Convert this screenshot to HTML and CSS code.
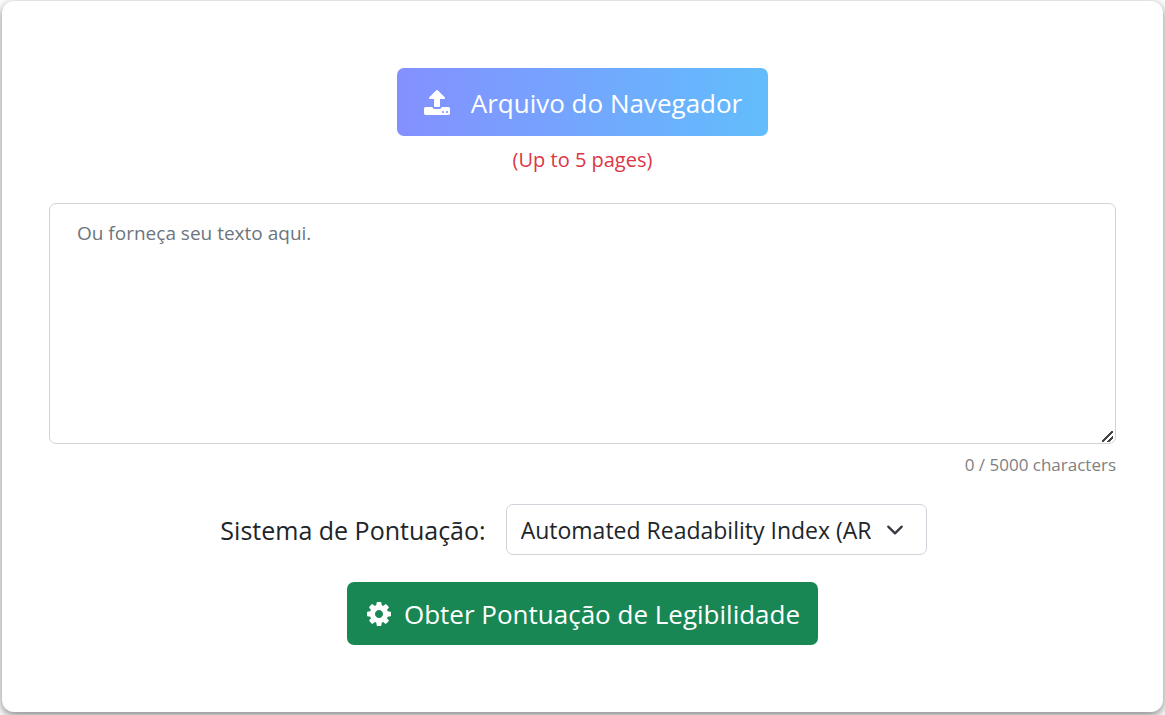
FILE: index.html
```html
<!DOCTYPE html>
<html lang="pt">
<head>
  <meta charset="UTF-8" />
  <meta name="viewport" content="width=device-width, initial-scale=1.0"/>
  <title>Pontuação de Legibilidade</title>
  <link rel="stylesheet" href="styles.css">
</head>
<body>
  <form class="card" id="scoreForm">
    <button type="button" class="btn btn-upload">
      <svg class="icon" viewBox="0 0 1792 1792" aria-hidden="true"><path d="M1344 1472q0-26-19-45t-45-19-45 19-19 45 19 45 45 19 45-19 19-45zm256 0q0-26-19-45t-45-19-45 19-19 45 19 45 45 19 45-19 19-45zm128-224v320q0 40-28 68t-68 28h-1472q-40 0-68-28t-28-68v-320q0-40 28-68t68-28h427q21 56 70.5 92t110.5 36h256q61 0 110.5-36t70.5-92h427q40 0 68 28t28 68zm-325-648q-17 40-59 40h-256v448q0 26-19 45t-45 19h-256q-26 0-45-19t-19-45v-448h-256q-42 0-59-40-17-39 14-69l448-448q18-19 45-19t45 19l448 448q31 30 14 69z"/></svg>
      <span>Arquivo do Navegador</span>
    </button>
    <p class="limit">(Up to 5 pages)</p>

    <textarea class="text-box" id="userText" aria-label="Texto" maxlength="5000" placeholder="Ou forneça seu texto aqui."></textarea>
    <p class="counter"><span id="charCount">0</span> / 5000 characters</p>

    <div class="score-row">
      <label for="scoreSystem">Sistema de Pontuação:</label>
      <div class="select-wrap">
        <select id="scoreSystem">
          <option>Automated Readability Index (ARI)</option>
          <option>Flesch Reading Ease</option>
          <option>Gunning Fog Index</option>
          <option>Coleman-Liau Index</option>
        </select>
        <svg class="chevron" viewBox="0 0 16 16" aria-hidden="true"><path d="m2 5 6 6 6-6"/></svg>
      </div>
    </div>

    <button type="submit" class="btn btn-score">
      <svg class="icon" viewBox="0 0 1792 1792" aria-hidden="true"><path d="M1152 896q0-106-75-181t-181-75-181 75-75 181 75 181 181 75 181-75 75-181zm512-109v222q0 12-8 23t-20 13l-185 28q-19 54-39 91 35 50 107 138 10 12 10 25t-9 23q-27 37-99 108t-94 71q-12 0-26-9l-138-108q-44 23-91 38-16 136-29 186-7 28-36 28h-222q-14 0-24.5-8.5t-11.5-21.5l-28-184q-49-16-90-37l-141 107q-10 9-25 9-14 0-25-11-126-114-165-168-7-10-7-23 0-12 8-23 15-21 51-66.5t54-70.5q-27-50-41-99l-183-27q-13-2-21-12.5t-8-23.5v-222q0-12 8-23t19-13l186-28q14-46 39-92-40-57-107-138-10-12-10-24 0-10 9-23 26-36 98.5-107.5t94.5-71.5q13 0 26 10l138 107q44-23 91-38 16-136 29-186 7-28 36-28h222q14 0 24.5 8.5t11.5 21.5l28 184q49 16 90 37l142-107q9-9 24-9 13 0 25 10 129 119 165 170 7 8 7 22 0 12-8 23-15 21-51 66.5t-54 70.5q26 50 41 98l183 28q13 2 21 12.5t8 23.5z"/></svg>
      <span>Obter Pontuação de Legibilidade</span>
    </button>
  </form>

  <script>
    const userText = document.getElementById("userText");

    userText.addEventListener("input", () => {
      document.getElementById("charCount").textContent = userText.value.length;
    });

    document.getElementById("scoreForm").addEventListener("submit", (e) => {
      e.preventDefault();
    });
  </script>
</body>
</html>
```
FILE: styles.css
```css
* {
  box-sizing: border-box;
}

body {
  margin: 0;
  padding: 1px 2px 3px;
  background-color: #fff;
  color: #212529;
  font-family: "Segoe UI", "Open Sans", "Noto Sans", sans-serif;
}

button, select, textarea {
  font-family: inherit;
}

p {
  margin: 0;
}

.card {
  display: flex;
  flex-direction: column;
  align-items: center;
  padding: 67px 47px;
  background-color: #fff;
  border-radius: 12px;
  box-shadow: 0 3px 10px rgba(0, 0, 0, 0.5);
}

.btn {
  display: flex;
  align-items: center;
  justify-content: center;
  border: none;
  border-radius: 7px;
  color: #fff;
  font-size: 26px;
  line-height: 36px;
  cursor: pointer;
}

.icon {
  width: 28px;
  height: 28px;
  fill: currentColor;
}

.btn-upload {
  gap: 20px;
  padding: 17px 26px 15px;
  background: linear-gradient(to right, #8490ff, #62bdfc);
}

.limit {
  margin-top: 10px;
  color: #dc3545;
  font-size: 20px;
  line-height: 28px;
}

.text-box {
  width: 100%;
  height: 241px;
  margin-top: 29px;
  padding: 15px 27px;
  border: 1px solid #ced4da;
  border-radius: 7px;
  color: #212529;
  font-size: 19px;
  line-height: 28px;
  resize: vertical;
}

.text-box::placeholder {
  color: #6c757d;
}

/* two diagonal grip lines in the corner */
.text-box::-webkit-resizer {
  background: linear-gradient(135deg, transparent 45%, #444 45%, #444 55%, transparent 55%, transparent 72%, #444 72%, #444 82%, transparent 82%) 2px 3px / 11px 11px no-repeat;
}

.counter {
  align-self: flex-end;
  margin-top: 7px;
  color: #808080;
  font-size: 17px;
  line-height: 28px;
}

.score-row {
  display: flex;
  align-items: center;
  gap: 20px;
  margin-top: 25px;
  padding-right: 18px;
  font-size: 25px;
}

.select-wrap {
  position: relative;
}

.select-wrap select {
  display: block;
  width: 421px;
  height: 51px;
  padding: 0 55px 0 14px;
  border: 1px solid #ced4da;
  border-radius: 7px;
  background-color: #fff;
  color: #212529;
  font-size: 23px;
  appearance: none;
}

.chevron {
  position: absolute;
  top: 17px;
  right: 23px;
  width: 18px;
  height: 18px;
  fill: none;
  stroke: #343a40;
  stroke-width: 2;
  stroke-linecap: round;
  stroke-linejoin: round;
  pointer-events: none;
}

.btn-score {
  gap: 11px;
  margin-top: 27px;
  padding: 14px 18px 13px;
  background-color: #198754;
}
```
